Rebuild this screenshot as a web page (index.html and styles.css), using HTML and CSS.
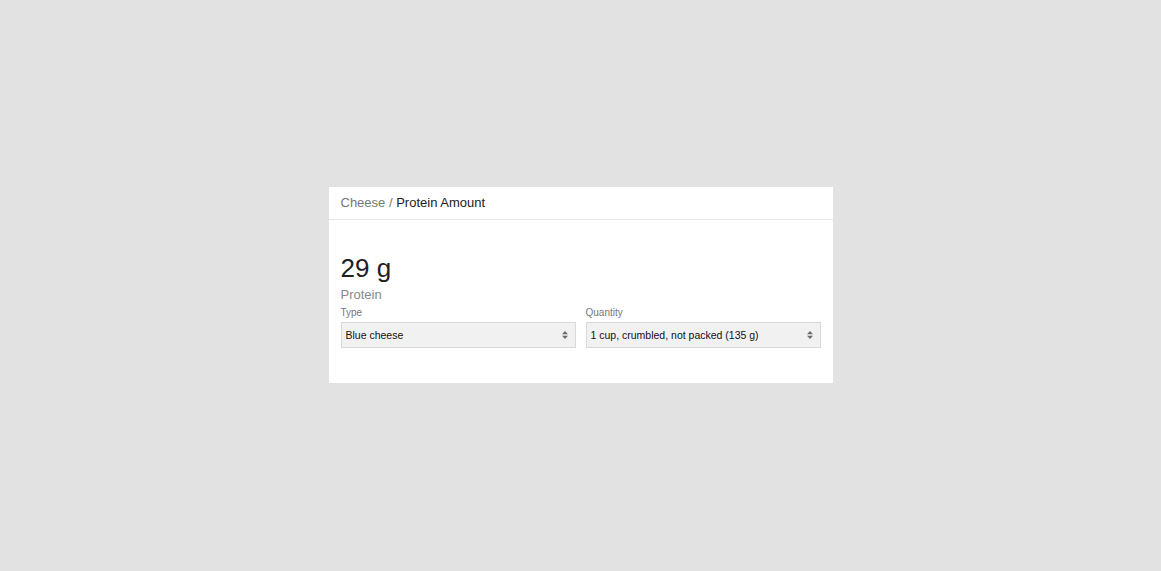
FILE: index.html
```html
<!DOCTYPE html>
<html>
<head>
<meta charset="utf-8">
<link rel="stylesheet" href="styles.css">
</head>
<body>
<div class="card">
  <div class="card-header">
    <span class="crumb">Cheese</span> <span class="sep">/</span> <span class="current">Protein Amount</span>
  </div>
  <div class="card-body">
    <div class="value">29 g</div>
    <div class="value-label">Protein</div>
    <div class="fields">
      <div class="field">
        <div class="field-label">Type</div>
        <div class="select">
          <span class="select-text">Blue cheese</span>
          <svg class="arrows" width="6" height="8" viewBox="0 0 6 8"><path d="M0 3.2 L3 0 L6 3.2 Z M0 4.8 L3 8 L6 4.8 Z" fill="#6b6b6b"/></svg>
        </div>
      </div>
      <div class="field">
        <div class="field-label">Quantity</div>
        <div class="select">
          <span class="select-text">1 cup, crumbled, not packed (135 g)</span>
          <svg class="arrows" width="6" height="8" viewBox="0 0 6 8"><path d="M0 3.2 L3 0 L6 3.2 Z M0 4.8 L3 8 L6 4.8 Z" fill="#6b6b6b"/></svg>
        </div>
      </div>
    </div>
  </div>
</div>
</body>
</html>
```
FILE: styles.css
```css
html, body {
  margin: 0;
  padding: 0;
}
body {
  background: #e2e2e2;
  font-family: "Liberation Sans", Arial, sans-serif;
  height: 570px;
  display: flex;
  align-items: center;
  justify-content: center;
}
.card {
  width: 504px;
  background: #ffffff;
}
.card-header {
  height: 32px;
  line-height: 32px;
  padding: 0 12px;
  border-bottom: 1px solid #e6e6e6;
  font-size: 13px;
  color: #222;
}
.crumb, .sep {
  color: #777;
}
.current {
  color: #222;
}
.card-body {
  padding: 33px 12px 35px;
}
.value {
  font-size: 26px;
  line-height: 30px;
  color: #212121;
  margin-bottom: 4px;
}
.value-label {
  font-size: 13px;
  line-height: 16px;
  color: #888;
  margin-bottom: 4px;
}
.fields {
  display: grid;
  grid-template-columns: 1fr 1fr;
  gap: 10px;
}
.field-label {
  font-size: 10px;
  line-height: 12px;
  color: #777;
  margin-bottom: 3px;
}
.select {
  height: 26px;
  box-sizing: border-box;
  border: 1px solid #d9d9d9;
  background: #f1f1f1;
  display: flex;
  align-items: center;
  justify-content: space-between;
  padding: 0 7px 0 4px;
}
.select-text {
  font-size: 10.5px;
  color: #111;
}
.arrows {
  display: block;
}
```
